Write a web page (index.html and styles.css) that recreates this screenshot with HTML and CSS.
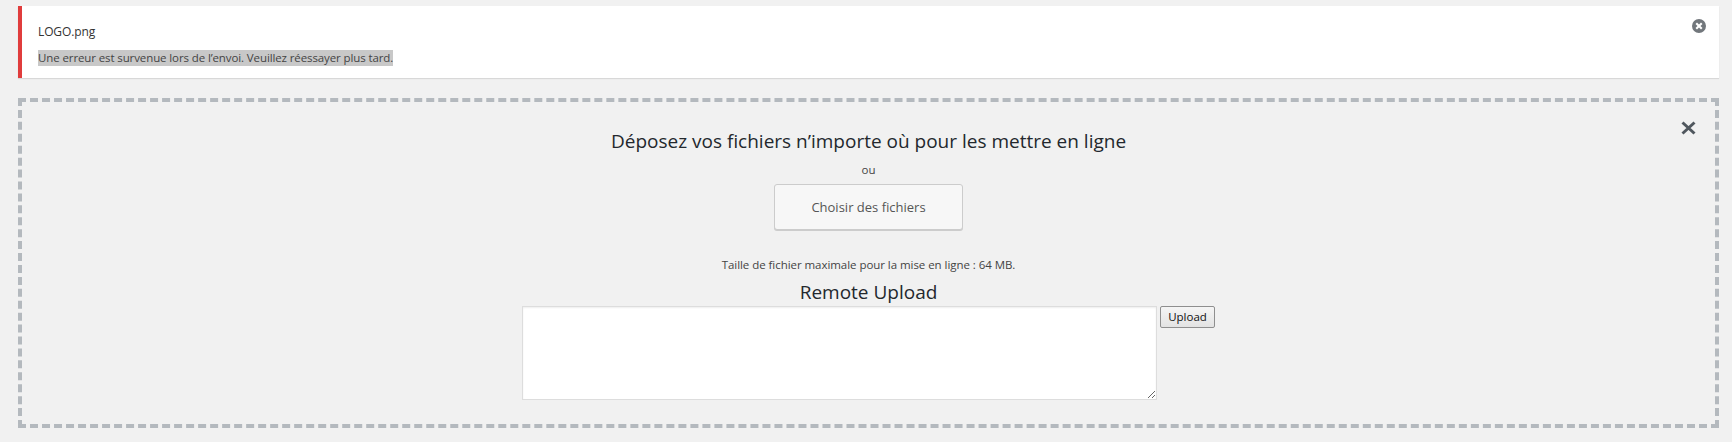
FILE: index.html
```html
<!DOCTYPE html>
<html lang="fr">
<head>
<meta charset="utf-8">
<title>Téléverser</title>
<link rel="stylesheet" href="styles.css">
</head>
<body>
<div class="notice">
  <p class="file">LOGO.png</p>
  <p class="msg"><span class="sel">Une erreur est survenue lors de l’envoi. Veuillez réessayer plus tard.</span></p>
  <button class="dismiss" type="button" aria-label="Fermer">
    <svg viewBox="0 0 14 14" width="14" height="14"><path class="dismiss-shape" fill-rule="evenodd" d="M7 0a7 7 0 1 0 0 14A7 7 0 0 0 7 0zM10.500 5 8.500 7l2 2L9 10.500l-2-2-2 2L3.500 9l2-2-2-2L5 3.500l2 2 2-2z"/></svg>
  </button>
</div>
<section class="drop">
  <button class="close" type="button" aria-label="Fermer">
    <svg viewBox="0 0 15 14" width="15" height="14"><path class="close-shape" d="M1.500 1.500 13.500 12.500M13.500 1.500 1.500 12.500"/></svg>
  </button>
  <h2 class="title">Déposez vos fichiers n’importe où pour les mettre en ligne</h2>
  <p class="or">ou</p>
  <button class="choose" type="button">Choisir des fichiers</button>
  <p class="max">Taille de fichier maximale pour la mise en ligne : 64 MB.</p>
  <h2 class="remote">Remote Upload</h2>
  <div class="remote-row">
    <textarea class="urls"></textarea>
    <button class="upload" type="button">Upload</button>
  </div>
</section>
</body>
</html>
```
FILE: styles.css
```css
html, body { margin: 0; padding: 0; }
body {
  background: #f1f1f1;
  color: #444;
  font-family: "Open Sans", "Noto Sans", sans-serif;
  font-size: 12px;
  height: 442px;
  overflow: hidden;
  padding: 6px 13px 0 18px;
  box-sizing: border-box;
}
.notice {
  position: relative;
  background: #fff;
  border-left: 4px solid #e03c3c;
  box-shadow: 0 1px 1px rgba(0,0,0,.1);
  height: 72px;
  box-sizing: border-box;
  padding: 18px 0 0 16px;
}
.file, .msg { margin: 0; font-size: 12px; line-height: 16px; }
.file { color: #333; letter-spacing: -.12px; }
.msg { margin-top: 10px; font-size: 11.500px; letter-spacing: -.11px; }
.sel { background: #c8c8c8; display: inline-block; }
.dismiss, .close { position: absolute; background: none; border: 0; padding: 0; display: flex; }
.dismiss { top: 13px; right: 13px; }
.dismiss-shape { fill: #72777c; }
.drop {
  position: relative;
  margin-top: 20px;
  height: 330px;
  box-sizing: border-box;
  border: 4px dashed #b4b9be;
  display: flex;
  flex-direction: column;
  align-items: center;
}
.close { top: 19px; right: 19px; }
.close-shape { fill: none; stroke: #50575e; stroke-width: 3; }
.title, .remote { margin: 0; font-weight: 400; font-size: 19px; line-height: 28px; color: #23282d; }
.title { margin-top: 25px; }
.or { margin: 7px 0 0; line-height: 16px; font-size: 11.500px; }
.choose {
  margin-top: 6px;
  width: 189px;
  height: 46px;
  box-sizing: border-box;
  background: #f7f7f7;
  border: 1px solid #ccc;
  border-radius: 3px;
  box-shadow: 0 1px 0 #ccc;
  color: #555;
  font: 13px/1 "Open Sans", "Noto Sans", sans-serif;
}
.max { margin: 27px 0 0; line-height: 16px; font-size: 11.500px; letter-spacing: -.05px; }
.remote { margin-top: 6px; line-height: 27px; }
.remote-row { display: flex; align-items: flex-start; gap: 3px; }
.urls {
  width: 635px;
  height: 94px;
  box-sizing: border-box;
  margin: 0;
  background: #fff;
  border: 1px solid #ddd;
  box-shadow: inset 0 1px 2px rgba(0,0,0,.07);
  display: block;
}
.upload {
  width: 55px;
  height: 22px;
  padding: 0;
  box-sizing: border-box;
  background: linear-gradient(#f5f5f5, #e3e3e3);
  border: 1px solid #8f8f8f;
  border-radius: 2px;
  color: #111;
  font: 11.500px/1 "Open Sans", "Noto Sans", sans-serif;
}
```
